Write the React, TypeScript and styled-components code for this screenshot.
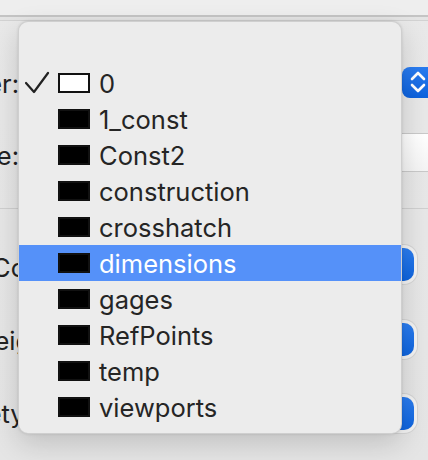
import styled, { createGlobalStyle } from "styled-components";

const GlobalStyle = createGlobalStyle`
  html, body {
    margin: 0;
    padding: 0;
  }
  body {
    background: #e7e7e7;
    font-family: Inter, "Liberation Sans", sans-serif;
    overflow: hidden;
  }
`;

const Window = styled.div`
  position: relative;
  width: 428px;
  height: 460px;
  overflow: hidden;
  background: linear-gradient(#e9e9e9, #e5e5e5);
  color: #222;
`;

const TitleStrip = styled.div`
  height: 15px;
  background: #eeeeee;
  border-bottom: 2px solid #c4c4c4;
`;

const SubStrip = styled.div`
  height: 3px;
  background: #e4e4e4;
  border-bottom: 1px solid #d2d2d2;
`;

const Section = styled.div<{ $top: number; $height: number; $bordered?: boolean }>`
  height: ${(p) => p.$height}px;
  padding-top: ${(p) => p.$top}px;
  box-sizing: border-box;
  border-bottom: ${(p) => (p.$bordered ? "1px solid #d0d0d0" : "none")};
  display: flex;
  flex-direction: column;
`;

const Row = styled.div<{ $h: number; $gap?: number }>`
  height: ${(p) => p.$h}px;
  margin-bottom: ${(p) => p.$gap ?? 0}px;
  display: flex;
  align-items: center;
`;

// right-aligned label column, the window is scrolled so only its tail shows
const Label = styled.div<{ $dy?: number }>`
  width: 19px;
  flex: none;
  display: flex;
  justify-content: flex-end;
  white-space: nowrap;
  font-size: 25.5px;
  color: #222;
  padding-top: ${(p) => p.$dy ?? 0}px;
`;

// labels of the lower group, the menu hides all but a few letters
const SideLabel = styled.div<{ $shift: number; $dy?: number }>`
  width: 18px;
  flex: none;
  overflow: hidden;
  text-indent: ${(p) => -p.$shift}px;
  padding-top: ${(p) => p.$dy ?? 0}px;
  white-space: nowrap;
  font-size: 25.5px;
  color: #222;
`;

const Stepper = styled.div`
  margin-left: auto;
  margin-right: -20px;
  width: 46px;
  height: 31px;
  border-radius: 8px;
  background: linear-gradient(#2a7cf0, #0d62dd);
  display: flex;
  align-items: center;
  padding-left: 7px;
  box-sizing: border-box;
`;

const Field = styled.div`
  margin-left: auto;
  width: 300px;
  height: 39px;
  background: linear-gradient(#ffffff, #f4f4f4);
  border-top: 1px solid #c9c9c9;
  border-bottom: 1px solid #c9c9c9;
  box-sizing: border-box;
`;

const PopButton = styled.div`
  margin-left: auto;
  margin-right: 14px;
  width: 200px;
  height: 33px;
  border-radius: 10px;
  background: linear-gradient(#2b7df0, #0e64de);
  box-shadow: 0 0 0 3px #f3f3f3, 0 0 0 4px #d6d6d6;
`;

const Menu = styled.div`
  position: absolute;
  left: 18px;
  top: 21px;
  width: 384px;
  height: 413px;
  box-sizing: border-box;
  padding: 43px 0 8px;
  background: #ececec;
  border-radius: 10px;
  border: 1px solid rgba(0, 0, 0, 0.12);
  box-shadow: 0 10px 28px rgba(0, 0, 0, 0.16), 0 0 3px rgba(0, 0, 0, 0.12);
  overflow: hidden;
  display: flex;
  flex-direction: column;
`;

const Item = styled.div<{ $active?: boolean }>`
  height: 36px;
  flex: none;
  margin: 0 -1px;
  display: flex;
  align-items: center;
  background: ${(p) => (p.$active ? "#5591f9" : "transparent")};
  color: ${(p) => (p.$active ? "#ffffff" : "#252525")};
  font-size: 25.5px;
  white-space: nowrap;
`;

const CheckSlot = styled.div`
  width: 40px;
  padding-left: 7px;
  box-sizing: border-box;
  display: flex;
  align-items: center;
  flex: none;
`;

const Swatch = styled.div<{ $empty?: boolean }>`
  width: 32px;
  height: 20px;
  box-sizing: border-box;
  flex: none;
  background: ${(p) => (p.$empty ? "#ffffff" : "#000000")};
  border: 2px solid #111;
  margin-right: 9px;
`;

const layers = [
  "0",
  "1_const",
  "Const2",
  "construction",
  "crosshatch",
  "dimensions",
  "gages",
  "RefPoints",
  "temp",
  "viewports",
];

const Check = () => (
  <svg width="26" height="24" viewBox="0 0 26 24">
    <polyline
      points="1,12 9,21 23,2"
      fill="none"
      stroke="#222"
      strokeWidth="2.2"
      strokeLinecap="round"
      strokeLinejoin="round"
    />
  </svg>
);

const Chevrons = () => (
  <svg width="20" height="26" viewBox="0 0 20 26">
    <polyline points="3,10 9,4 15,10" fill="none" stroke="#fff" strokeWidth="2.6" strokeLinecap="round" strokeLinejoin="round" />
    <polyline points="3,16 9,22 15,16" fill="none" stroke="#fff" strokeWidth="2.6" strokeLinecap="round" strokeLinejoin="round" />
  </svg>
);

export default function App() {
  return (
    <>
      <GlobalStyle />
      <Window>
        <TitleStrip />
        <SubStrip />
        <Section $top={43} $height={188} $bordered>
          <Row $h={36} $gap={32}>
            <Label $dy={3}>Layer:</Label>
            <Stepper>
              <Chevrons />
            </Stepper>
          </Row>
          <Row $h={41}>
            <Label $dy={5}>Linetype:</Label>
            <Field />
          </Row>
        </Section>
        <Section $top={37} $height={250}>
          <Row $h={36} $gap={39}>
            <SideLabel $shift={8} $dy={6}>Color:</SideLabel>
            <PopButton />
          </Row>
          <Row $h={36} $gap={38}>
            <SideLabel $shift={76} $dy={3}>Lineweight:</SideLabel>
            <PopButton />
          </Row>
          <Row $h={36}>
            <SideLabel $shift={49} $dy={0}>Linetype</SideLabel>
            <PopButton />
          </Row>
        </Section>
        <Menu>
          {layers.map((name, i) => (
            <Item key={name} $active={name === "dimensions"}>
              <CheckSlot>{i === 0 && <Check />}</CheckSlot>
              <Swatch $empty={i === 0} />
              {name}
            </Item>
          ))}
        </Menu>
      </Window>
    </>
  );
}
